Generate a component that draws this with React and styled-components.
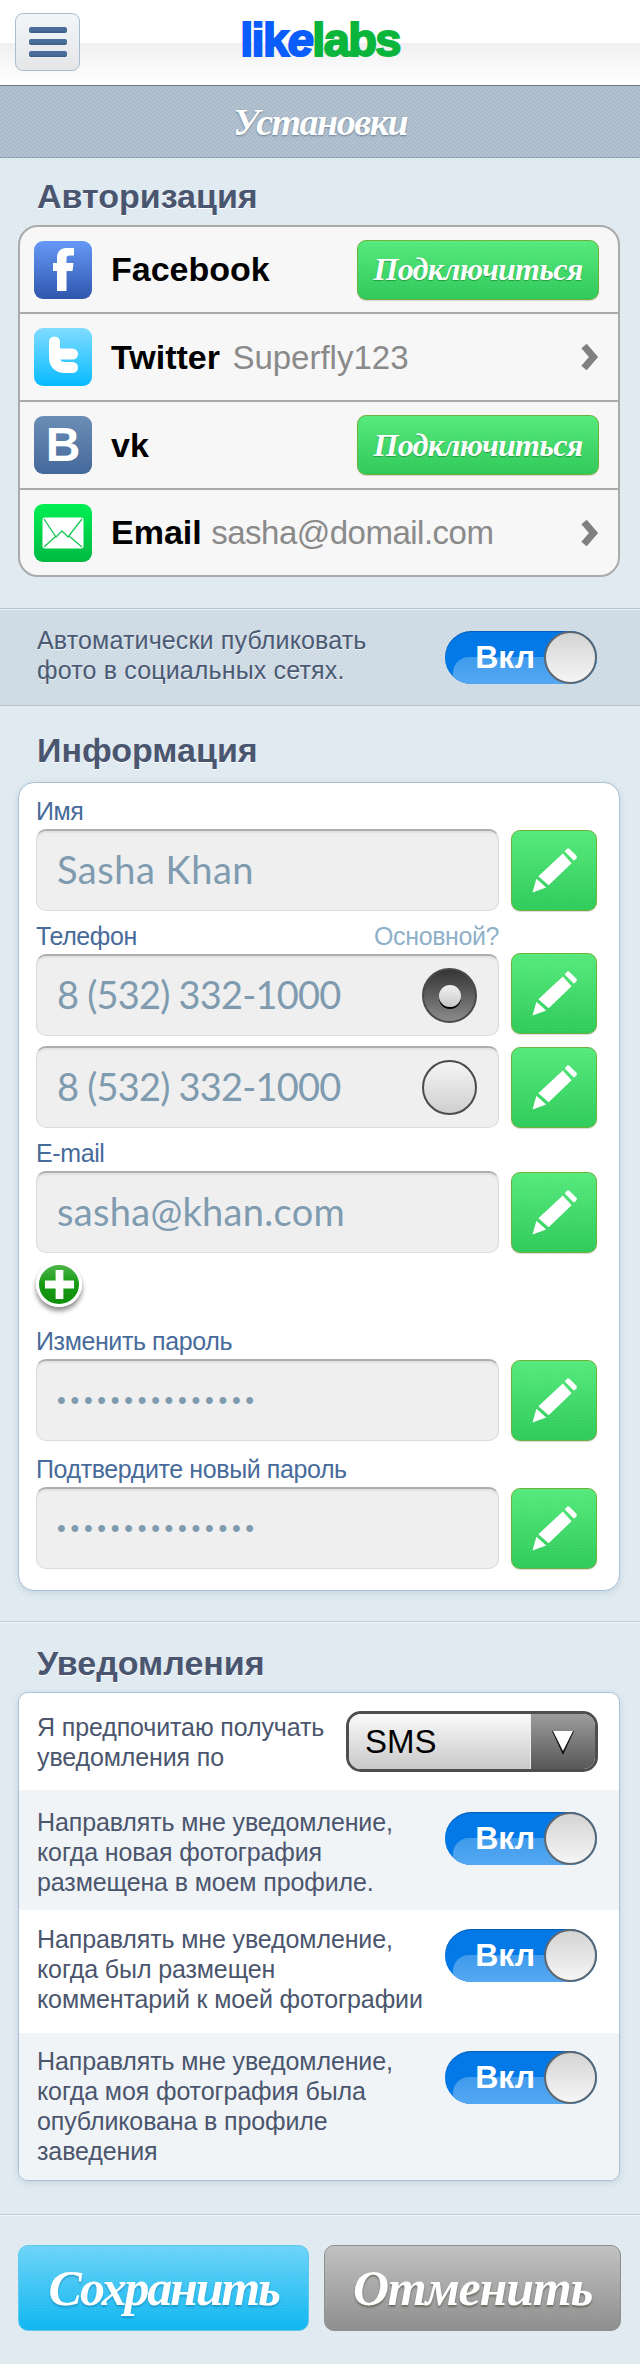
import styled, { createGlobalStyle } from "styled-components"

const GlobalStyle = createGlobalStyle`
    html, body {
        margin: 0;
        padding: 0;
    }
    body {
        font-family: "Liberation Sans", Arial, sans-serif;
    }
    * {
        box-sizing: border-box;
    }
`

const cloth = `linear-gradient(135deg, rgba(255,255,255,0.17) 25%, transparent 25%, transparent 50%, rgba(255,255,255,0.17) 50%, rgba(255,255,255,0.17) 75%, transparent 75%)`
const dots = `radial-gradient(rgba(255,255,255,0.07) 1px, transparent 1px)`
const script = `"Liberation Serif", "Times New Roman", serif`

const Pencil = () => (
    <svg width="86" height="81" viewBox="0 0 86 81">
        <path fill="#fff" d="M21 63 L25 49 L35 58 Z" />
        <path fill="#fff" d="M27 46.500 L52 23 L61 33 L37.500 55.500 Z" />
        <path fill="#fff" d="M54 21 L56 18.500 Q57.500 17 59 18.500 L66 25.500 Q67 27 66 28 L63.500 30.500 Z" />
    </svg>
)

const Chevron = () => (
    <svg width="18" height="26" viewBox="0 0 18 26">
        <path fill="none" stroke="#808080" strokeWidth="7" d="M3 2 L12.500 13 L3 24" />
    </svg>
)

const FacebookIcon = () => (
    <Tile $from="#6699f7" $to="#2f56ad">
        <svg width="58" height="58" viewBox="0 0 58 58">
            <path fill="#fff" d="M23 50 V30 H19 V22 H23 V17 C23 10 27 7 33 7 H40 V14.500 H35.500 C33.500 14.500 32.500 15.500 32.500 17 V22 H39.500 L38.500 30 H32.500 V50 Z" />
        </svg>
    </Tile>
)

const TwitterIcon = () => (
    <Tile $from="#80dcff" $to="#07bbff">
        <svg width="58" height="58" viewBox="0 0 58 58">
            <path fill="none" stroke="#fff" strokeWidth="11" strokeLinecap="round" d="M20.500 14 V29 C20.500 36 24 39.500 31 39.500 H38.500 M20.500 26 H38.500" />
        </svg>
    </Tile>
)

const VkIcon = () => (
    <Tile $from="#6b8eb6" $to="#44689a">
        <VkLetter>B</VkLetter>
    </Tile>
)

const EmailIcon = () => (
    <Tile $from="#00f052" $to="#00b943">
        <svg width="58" height="58" viewBox="0 0 58 58">
            <rect x="8.500" y="13.500" width="41" height="31" rx="2" fill="#fff" />
            <path fill="none" stroke="#17c653" strokeWidth="1.300" d="M10 15 L22 33 L28 27 L34 33 L48 15 M10 43 L22 32 M48 43 L35 32" />
        </svg>
    </Tile>
)

const Toggle = ({ $mt }) => (
    <ToggleTrack $mt={$mt}>
        <ToggleLabel>Вкл</ToggleLabel>
        <ToggleKnob />
    </ToggleTrack>
)

const EditRow = ({ children, $up }) => (
    <FieldRow>
        <Input>{children}</Input>
        <EditBtn $up={$up}><Pencil /></EditBtn>
    </FieldRow>
)

const App = () => {
    return (
        <>
            <GlobalStyle />
            <Page>
                <Header>
                    <MenuBtn>
                        <MenuBar />
                        <MenuBar />
                        <MenuBar />
                    </MenuBtn>
                    <Logo>lik<LogoE>e</LogoE><LogoGreen>labs</LogoGreen></Logo>
                </Header>
                <TitleBar>Установки</TitleBar>

                <Section $top={18} $bottom={31}>
                    <Heading $mb={9}>Авторизация</Heading>
                    <AccountCard>
                        <AccountRow>
                            <FacebookIcon />
                            <AccountName>Facebook</AccountName>
                            <ConnectBtn>Подключиться</ConnectBtn>
                        </AccountRow>
                        <AccountRow>
                            <TwitterIcon />
                            <AccountName>Twitter <AccountValue $ls={0} $ml={3}>Superfly123</AccountValue></AccountName>
                            <ChevronBox><Chevron /></ChevronBox>
                        </AccountRow>
                        <AccountRow>
                            <VkIcon />
                            <AccountName>vk</AccountName>
                            <ConnectBtn>Подключиться</ConnectBtn>
                        </AccountRow>
                        <AccountRow>
                            <EmailIcon />
                            <AccountName>Email <AccountValue $ls={-0.5}>sasha@domail.com</AccountValue></AccountName>
                            <ChevronBox><Chevron /></ChevronBox>
                        </AccountRow>
                    </AccountCard>
                </Section>

                <AutoStrip>
                    <AutoText>Автоматически публиковать<br />фото в социальных сетях.</AutoText>
                    <Toggle />
                </AutoStrip>

                <Section $top={24} $bottom={30} $line>
                    <Heading $mb={12}>Информация</Heading>
                    <InfoCard>
                        <FieldLabel>Имя</FieldLabel>
                        <EditRow><InputText $ls={0.5}>Sasha Khan</InputText></EditRow>

                        <LabelRow $mt={12}>
                            <FieldLabel>Телефон</FieldLabel>
                            <PrimaryHint>Основной?</PrimaryHint>
                        </LabelRow>
                        <EditRow $up={4}>
                            <InputText $ls={-0.8}>8 (532) 332-1000</InputText>
                            <Radio $on><RadioDot /></Radio>
                        </EditRow>
                        <Spacer $h={10} />
                        <EditRow>
                            <InputText $ls={-0.8}>8 (532) 332-1000</InputText>
                            <Radio />
                        </EditRow>

                        <FieldLabel $mt={12}>E-mail</FieldLabel>
                        <EditRow><InputText $ls={0.3}>sasha@khan.com</InputText></EditRow>
                        <AddBtn>
                            <svg width="34" height="34" viewBox="0 0 34 34">
                                <path fill="#fff" d="M13 2 H21 V13 H32 V21 H21 V32 H13 V21 H2 V13 H13 Z" />
                            </svg>
                        </AddBtn>

                        <FieldLabel $mt={21}>Изменить пароль</FieldLabel>
                        <EditRow><PasswordDots>{"•".repeat(15)}</PasswordDots></EditRow>

                        <FieldLabel $mt={15}>Подтвердите новый пароль</FieldLabel>
                        <EditRow><PasswordDots>{"•".repeat(15)}</PasswordDots></EditRow>
                    </InfoCard>
                </Section>

                <Section $top={21} $bottom={33} $line>
                    <Heading $mb={9}>Уведомления</Heading>
                    <NoticeCard>
                        <SelectRow>
                            <NoticeText>Я предпочитаю получать<br />уведомления по</NoticeText>
                            <Select>
                                <SelectValue>SMS</SelectValue>
                                <SelectArrow>
                                    <svg width="24" height="26" viewBox="0 0 24 26">
                                        <path fill="#111" d="M1 2 H23 L12 26 Z" />
                                        <path fill="#fff" d="M2 2 H22 L12 22 Z" />
                                    </svg>
                                </SelectArrow>
                            </Select>
                        </SelectRow>
                        <NoticeRow $shaded $top={17} $bottom={13}>
                            <NoticeText>Направлять мне уведомление,<br />когда новая фотография<br />размещена в моем профиле.</NoticeText>
                            <Toggle $mt={5} />
                        </NoticeRow>
                        <NoticeRow $top={14} $bottom={19}>
                            <NoticeText>Направлять мне уведомление,<br />когда был размещен<br />комментарий к моей фотографии</NoticeText>
                            <Toggle $mt={5} />
                        </NoticeRow>
                        <NoticeRow $shaded $top={13} $bottom={14}>
                            <NoticeText>Направлять мне уведомление,<br />когда моя фотография была<br />опубликована в профиле<br />заведения</NoticeText>
                            <Toggle $mt={5} />
                        </NoticeRow>
                    </NoticeCard>
                </Section>

                <Footer>
                    <SaveBtn>Сохранить</SaveBtn>
                    <CancelBtn>Отменить</CancelBtn>
                </Footer>
            </Page>
        </>
    )
}

const Page = styled.div`
    width: 640px;
    height: 2364px;
    overflow: hidden;
    background-color: #dde8ef;
    background-image: ${cloth};
    background-size: 4px 4px;
`

const Header = styled.header`
    height: 86px;
    padding-top: 13px;
    position: relative;
    display: flex;
    justify-content: center;
    background: linear-gradient(#fff 0, #fff 43px, #f0f0f0 43px, #fdfdfd 78px, #fff 100%);
    border-bottom: 1px solid #6c7683;
`

const MenuBtn = styled.div`
    position: absolute;
    left: 15px;
    top: 13px;
    width: 65px;
    height: 58px;
    display: flex;
    flex-direction: column;
    align-items: center;
    justify-content: center;
    gap: 6px;
    border: 1px solid #aabdd0;
    border-radius: 8px;
    background: linear-gradient(#f3f6f9, #e4e6e8);
`

const MenuBar = styled.span`
    width: 38px;
    height: 6px;
    border-radius: 2px;
    background: linear-gradient(#4a6e9b 50%, #3c5c84);
`

const Logo = styled.div`
    margin-top: 5px;
    font-family: "Liberation Sans", sans-serif;
    font-size: 47px;
    font-weight: bold;
    line-height: 44px;
    letter-spacing: -1.6px;
    color: #0a5cfb;
    -webkit-text-stroke: 2px currentColor;
`

const LogoE = styled.span`
    font-style: italic;
`

const LogoGreen = styled.span`
    color: #0bb53c;
`

const TitleBar = styled.div`
    height: 72px;
    display: flex;
    align-items: center;
    justify-content: center;
    background-color: #a7b8c9;
    background-image: ${cloth};
    background-size: 4px 4px;
    border-bottom: 1px solid #8fa4bb;
    font-family: ${script};
    font-size: 38px;
    font-weight: bold;
    font-style: italic;
    letter-spacing: -1.5px;
    color: #fff;
    text-shadow: 0 1px 2px rgba(60, 85, 110, 0.6);
`

const Section = styled.section`
    padding: ${p => p.$top}px 20px ${p => p.$bottom}px 18px;
    border-bottom: ${p => (p.$line ? "1px solid #bfcbd6" : "none")};
    box-shadow: ${p => (p.$line ? "0 1px 0 #f2f6f9" : "none")};
`

const Heading = styled.h2`
    margin: 0 0 ${p => p.$mb}px;
    padding-left: 19px;
    font-size: 34px;
    line-height: 40px;
    font-weight: bold;
    color: #4a5670;
    text-shadow: 0 1px 0 #fff;
`

const AccountCard = styled.div`
    width: 602px;
    border: 2px solid #aaa;
    border-radius: 20px;
    background: #f7f7f7;
    overflow: hidden;
`

const AccountRow = styled.div`
    height: 88px;
    padding: 0 19px 0 14px;
    display: flex;
    align-items: center;
    gap: 19px;
    border-top: 2px solid #aaa;
    &:first-child {
        height: 85px;
        border-top: none;
    }
    &:last-child {
        height: 87px;
    }
`

const Tile = styled.div`
    flex: none;
    width: 58px;
    height: 58px;
    border-radius: 9px;
    display: flex;
    align-items: center;
    justify-content: center;
    background: linear-gradient(${p => p.$from}, ${p => p.$to});
`

const VkLetter = styled.span`
    font-size: 48px;
    font-weight: bold;
    line-height: 58px;
    color: #fff;
`

const AccountName = styled.div`
    flex: 1;
    font-size: 34px;
    font-weight: bold;
    color: #000;
    white-space: nowrap;
`

const AccountValue = styled.span`
    margin-left: ${p => p.$ml || 0}px;
    font-size: 33px;
    font-weight: normal;
    color: #8a8a8a;
    letter-spacing: ${p => p.$ls}px;
`

const GreenBase = styled.div`
    display: flex;
    align-items: center;
    justify-content: center;
    border: 1px solid #6db23c;
    border-radius: 9px;
    background-image: ${dots}, linear-gradient(#56e97c, #2fc95a);
    background-size: 3px 3px, auto;
    box-shadow: 0 1px 1px rgba(0, 0, 0, 0.15);
`

const ConnectBtn = styled(GreenBase)`
    flex: none;
    width: 242px;
    height: 60px;
    font-family: ${script};
    font-size: 32px;
    font-weight: bold;
    font-style: italic;
    letter-spacing: -0.7px;
    color: #fff;
    text-shadow: 0 1px 1px rgba(0, 90, 30, 0.45);
`

const ChevronBox = styled.div`
    flex: none;
    width: 18px;
    display: flex;
`

const AutoStrip = styled.div`
    height: 98px;
    padding: 0 43px 0 37px;
    display: flex;
    align-items: center;
    justify-content: space-between;
    background-color: #cbd8e2;
    background-image: ${cloth};
    background-size: 4px 4px;
    border-top: 1px solid #b6c3cf;
    border-bottom: 1px solid #b6c3cf;
    box-shadow: inset 0 1px 0 #eef3f6;
`

const AutoText = styled.p`
    margin: 0 0 4px;
    font-size: 25px;
    line-height: 30px;
    letter-spacing: 0.15px;
    color: #4b5a74;
    text-shadow: 0 1px 0 rgba(255, 255, 255, 0.6);
`

const ToggleTrack = styled.div`
    flex: none;
    position: relative;
    width: 152px;
    height: 53px;
    margin-top: ${p => p.$mt || 0}px;
    display: flex;
    align-items: center;
    justify-content: flex-end;
    border-radius: 27px;
    overflow: hidden;
    background: #0379e8;
    box-shadow: inset 0 1px 1px rgba(0, 40, 90, 0.35);
    &::before {
        content: "";
        position: absolute;
        left: 8px;
        right: 0;
        top: 26px;
        bottom: 0;
        border-radius: 16px 0 0 0;
        background: linear-gradient(#3f9bec, #55a8f2);
    }
`

const ToggleLabel = styled.span`
    position: relative;
    margin-right: 9px;
    font-size: 32px;
    font-weight: bold;
    color: #fff;
`

const ToggleKnob = styled.span`
    position: relative;
    flex: none;
    width: 53px;
    height: 53px;
    border-radius: 50%;
    border: 2px solid #5d6770;
    background: linear-gradient(#d4d4d4, #f5f5f5);
`

const CardBase = styled.div`
    width: 602px;
    background: #fff;
    border: 1px solid #a9c0d6;
    border-radius: 16px;
    box-shadow: 0 2px 6px rgba(120, 150, 180, 0.25);
`

const InfoCard = styled(CardBase)`
    padding: 15px 22px 21px 17px;
`

const FieldLabel = styled.div`
    margin-top: ${p => p.$mt || 0}px;
    margin-bottom: 5px;
    font-size: 25px;
    line-height: 26px;
    letter-spacing: -0.4px;
    color: #476b9a;
`

const LabelRow = styled.div`
    width: 463px;
    margin-top: ${p => p.$mt}px;
    display: flex;
    justify-content: space-between;
`

const PrimaryHint = styled.span`
    font-size: 25px;
    line-height: 26px;
    letter-spacing: -0.4px;
    color: #8fb0c9;
`

const FieldRow = styled.div`
    display: grid;
    grid-template-columns: 463px 86px;
    column-gap: 12px;
    align-items: center;
`

const Input = styled.div`
    height: 82px;
    padding: 0 21px 0 20px;
    display: flex;
    align-items: center;
    justify-content: space-between;
    border: 1px solid #dcdcdc;
    border-top: 2px solid #aeaeae;
    border-radius: 10px;
    background: #efefef;
    box-shadow: inset 0 2px 2px rgba(0, 0, 0, 0.06);
`

const InputText = styled.span`
    margin-bottom: 4px;
    font-family: Lato, "Open Sans", sans-serif;
    font-size: 38px;
    letter-spacing: ${p => p.$ls}px;
    color: #7f9bb0;
`

const PasswordDots = styled.span`
    font-family: "Liberation Sans", sans-serif;
    font-size: 25px;
    letter-spacing: 4.700px;
    color: #7f9bb0;
`

const EditBtn = styled(GreenBase)`
    width: 86px;
    height: 81px;
    margin-top: ${p => -(p.$up || 0)}px;
    background-image: ${dots}, linear-gradient(#56e97c, #2fcb5b);
`

const Radio = styled.div`
    width: 55px;
    height: 55px;
    margin-right: 0;
    display: flex;
    align-items: center;
    justify-content: center;
    border-radius: 50%;
    border: 2px solid #4a4a4a;
    background: ${p => (p.$on ? "linear-gradient(#353535, #8a8a8a)" : "linear-gradient(#f5f5f5, #cfcfcf)")};
`

const RadioDot = styled.span`
    width: 22px;
    height: 22px;
    border-radius: 50%;
    background: linear-gradient(#f2f2f2, #c8c8c8);
    box-shadow: 0 2px 0 #000;
`

const Spacer = styled.div`
    height: ${p => p.$h}px;
`

const AddBtn = styled.div`
    width: 46px;
    height: 45px;
    margin-top: 9px;
    display: flex;
    align-items: center;
    justify-content: center;
    border: 3px solid #fff;
    border-radius: 50%;
    background: linear-gradient(#4cb548, #169a12 50%, #0f8f0c);
    box-shadow: 0 4px 5px rgba(0, 0, 0, 0.45);
    & svg {
        width: 33px;
        height: 33px;
    }
`

const NoticeCard = styled(CardBase)`
    border-radius: 10px;
    overflow: hidden;
`

const SelectRow = styled.div`
    height: 97px;
    padding: 0 21px 0 18px;
    display: flex;
    align-items: center;
    justify-content: space-between;
`

const NoticeRow = styled.div`
    padding: ${p => p.$top}px 22px ${p => p.$bottom}px 18px;
    display: flex;
    align-items: flex-start;
    justify-content: space-between;
    background: ${p => (p.$shaded ? "#f0f4f7" : "#fff")};
`

const NoticeText = styled.p`
    margin: 0;
    font-size: 25px;
    line-height: 30px;
    white-space: nowrap;
    letter-spacing: -0.12px;
    color: #4b566e;
`

const Select = styled.div`
    width: 252px;
    height: 61px;
    display: flex;
    border: 3px solid #4e4e4e;
    border-radius: 15px;
    overflow: hidden;
`

const SelectValue = styled.div`
    flex: 1;
    padding-left: 16px;
    display: flex;
    align-items: center;
    font-size: 33px;
    color: #000;
    background: linear-gradient(#fafafa, #c9c9c9);
`

const SelectArrow = styled.div`
    flex: none;
    width: 65px;
    display: flex;
    align-items: center;
    justify-content: center;
    border-left: 1px solid #eee;
    background: linear-gradient(#9c9c9c, #585858);
`

const Footer = styled.footer`
    padding: 30px 0 0 18px;
    display: flex;
    gap: 15px;
`

const BigBtn = styled.div`
    height: 86px;
    display: flex;
    align-items: center;
    justify-content: center;
    border-radius: 10px;
    font-family: ${script};
    font-size: 50px;
    font-weight: bold;
    font-style: italic;
    color: #fff;
    background-size: 3px 3px, auto;
`

const SaveBtn = styled(BigBtn)`
    width: 291px;
    letter-spacing: -2.2px;
    border: 1px solid #62c8ee;
    background-image: ${dots}, linear-gradient(#6dd4f8, #0fb6f0);
    text-shadow: 0 2px 2px rgba(0, 90, 140, 0.35);
`

const CancelBtn = styled(BigBtn)`
    width: 297px;
    letter-spacing: -1.2px;
    border: 1px solid #8f8f8f;
    background-image: ${dots}, linear-gradient(#c1c1c1, #8e8e8e);
    text-shadow: 0 2px 2px rgba(60, 60, 40, 0.5);
`

export default App
